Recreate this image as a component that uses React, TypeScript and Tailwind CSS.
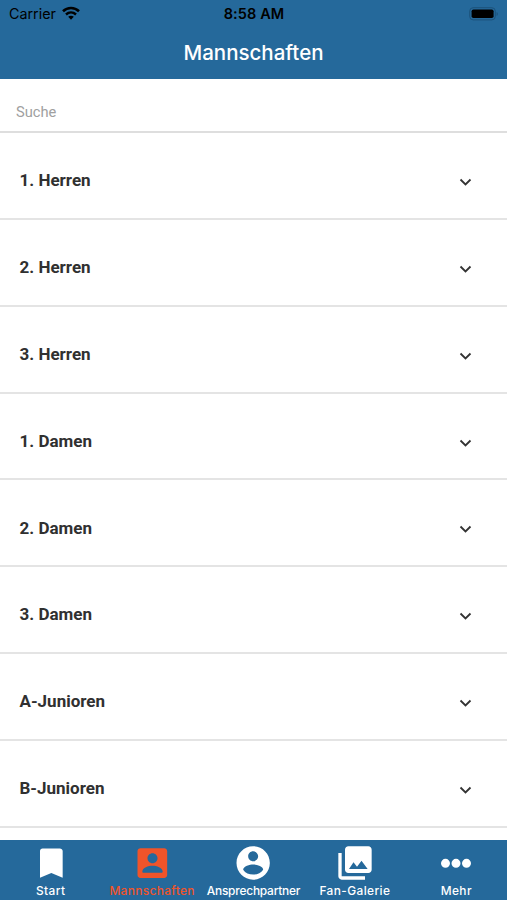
const teams = [
  '1. Herren',
  '2. Herren',
  '3. Herren',
  '1. Damen',
  '2. Damen',
  '3. Damen',
  'A-Junioren',
  'B-Junioren',
];

const tabs = [
  {
    label: 'Start',
    text: 'text-[11.9px] tracking-[0.4px]',
    path: 'M17.3 3.3H6.9c-.8 0-1.5.7-1.5 1.5v16.1l6.8-2.9 6.8 2.9V4.8c0-.8-.8-1.5-1.7-1.5z',
  },
  {
    label: 'Mannschaften',
    text: 'text-[11.9px] tracking-[0.35px]',
    active: true,
    path: 'M3.3 5v14.2c0 1 .8 1.8 1.8 1.8h14.2c1 0 1.8-.8 1.8-1.8V5c0-1-.8-1.8-1.8-1.8H5.1c-1 0-1.8.8-1.8 1.8zm12 4.2c0 1.66-1.34 3-3 3s-3-1.34-3-3 1.34-3 3-3 3 1.34 3 3zm-9.1 8c0-2.3 3.6-3.5 6.1-3.5s6.1 1.2 6.1 3.5c0 .4-.3.7-.7.7H6.9c-.4 0-.7-.3-.7-.7z',
  },
  {
    label: 'Ansprechpartner',
    text: 'text-[11.9px] tracking-[-0.2px]',
    path: 'M12.1 2C6.58 2 2.1 6.48 2.1 12s4.48 10 10 10 10-4.48 10-10S17.62 2 12.1 2zm0 3c1.66 0 3 1.34 3 3s-1.34 3-3 3-3-1.34-3-3 1.34-3 3-3zm0 13.9c-2.5 0-4.7-.9-6-2.9.03-2 4-3.1 6-3.1s5.97 1.1 6 3.1c-1.3 2-3.5 2.9-6 2.9z',
  },
  {
    label: 'Fan-Galerie',
    text: 'text-[11.9px] tracking-[0.4px]',
    path: 'M22 16V4c0-1.1-.9-2-2-2H8c-1.1 0-2 .9-2 2v12c0 1.1.9 2 2 2h12c1.1 0 2-.9 2-2zM8.4 15.6l2.7-4 2.1 2.6 2.7-3.5 3.7 4.9H8.4zM2 6v14c0 1.1.9 2 2 2h14v-2H4V6H2z',
  },
  {
    label: 'Mehr',
    text: 'text-[11.9px] tracking-[0.4px]',
    path: 'M5.7 9.5a2.7 2.7 0 1 0 0 5.4 2.7 2.7 0 0 0 0-5.4zm6.3 0a2.7 2.7 0 1 0 0 5.4 2.7 2.7 0 0 0 0-5.4zm6.3 0a2.7 2.7 0 1 0 0 5.4 2.7 2.7 0 0 0 0-5.4z',
  },
];

function StatusBar() {
  return (
    <div className="flex h-7 items-center justify-between pl-[9px] pr-2 text-black">
      <div className="flex w-24 items-center gap-[6px]">
        <span className="text-[14.3px] leading-none">Carrier</span>
        <svg width="18" height="14" viewBox="0 0 18 14" fill="none" stroke="currentColor" className="-mt-0.5">
          <path d="M1 5.2C5.5 0.9 12.5 0.9 17 5.2" strokeWidth="2.6" />
          <path d="M4 8.5C6.9 5.8 11.1 5.8 14 8.5" strokeWidth="2.4" />
          <path d="M9 13.7l-2.8-3c1.6-1.4 4-1.4 5.6 0z" fill="currentColor" stroke="none" />
        </svg>
      </div>
      <span className="text-[14.5px] font-semibold leading-none tracking-[0.1px]">8:58 AM</span>
      <div className="flex w-24 justify-end">
        <svg width="30" height="14" viewBox="0 0 30 14" className="-mt-px">
          <rect x="0.7" y="0.7" width="25.6" height="12.2" rx="3.5" fill="none" stroke="#1c527a" strokeWidth="1" />
          <rect x="2.6" y="2.5" width="22" height="8.6" rx="1.8" fill="#000" />
          <path d="M27.6 5v4c1.6-.6 1.6-3.4 0-4z" fill="#1c527a" />
        </svg>
      </div>
    </div>
  );
}

function TeamRow({ name }: { name: string }) {
  return (
    <button className="flex h-[86.8px] w-full shrink-0 items-center justify-between border-b-2 border-[#e4e4e4] pb-px pl-[19.5px] pr-[35px] pt-3 text-left">
      <span className="font-[Roboto] text-[17px] font-bold text-[#303030]">{name}</span>
      <svg width="13" height="9" viewBox="0 0 13 9" fill="none" stroke="#333" strokeWidth="1.8" className="mt-[3px]">
        <path d="M1.5 1.5l5 5 5-5" />
      </svg>
    </button>
  );
}

export default function App() {
  return (
    <div className="flex h-[900px] w-[507px] flex-col overflow-hidden bg-white font-[Inter,sans-serif]">
      <header className="h-[79px] shrink-0 bg-[#25699b]">
        <StatusBar />
        <h1 className="pt-[9px] text-center text-[20.5px] font-medium leading-8 text-white">Mannschaften</h1>
      </header>

      <div className="h-[53.5px] shrink-0 border-b-2 border-[#dedede] px-4 pt-[21px]">
        <input
          placeholder="Suche"
          className="block w-full font-[Roboto] text-[14.7px] leading-6 outline-none placeholder:text-[#a0a0a0]"
        />
      </div>

      <main className="flex min-h-0 flex-1 flex-col overflow-hidden pt-[0.8px]">
        {teams.map((name) => (
          <TeamRow key={name} name={name} />
        ))}
      </main>

      <nav className="grid h-[60px] shrink-0 grid-cols-5 bg-[#25699b]">
        {tabs.map((tab) => (
          <button
            key={tab.label}
            className={`flex flex-col items-center pt-[3.4px] ${tab.active ? 'text-[#f0542a]' : 'text-white'}`}
          >
            <svg width="40" height="40" viewBox="0 0 24 24" fill="currentColor" className="shrink-0">
              <path d={tab.path} />
            </svg>
            <span className={`whitespace-nowrap font-medium leading-4 ${tab.text}`}>{tab.label}</span>
          </button>
        ))}
      </nav>
    </div>
  );
}
